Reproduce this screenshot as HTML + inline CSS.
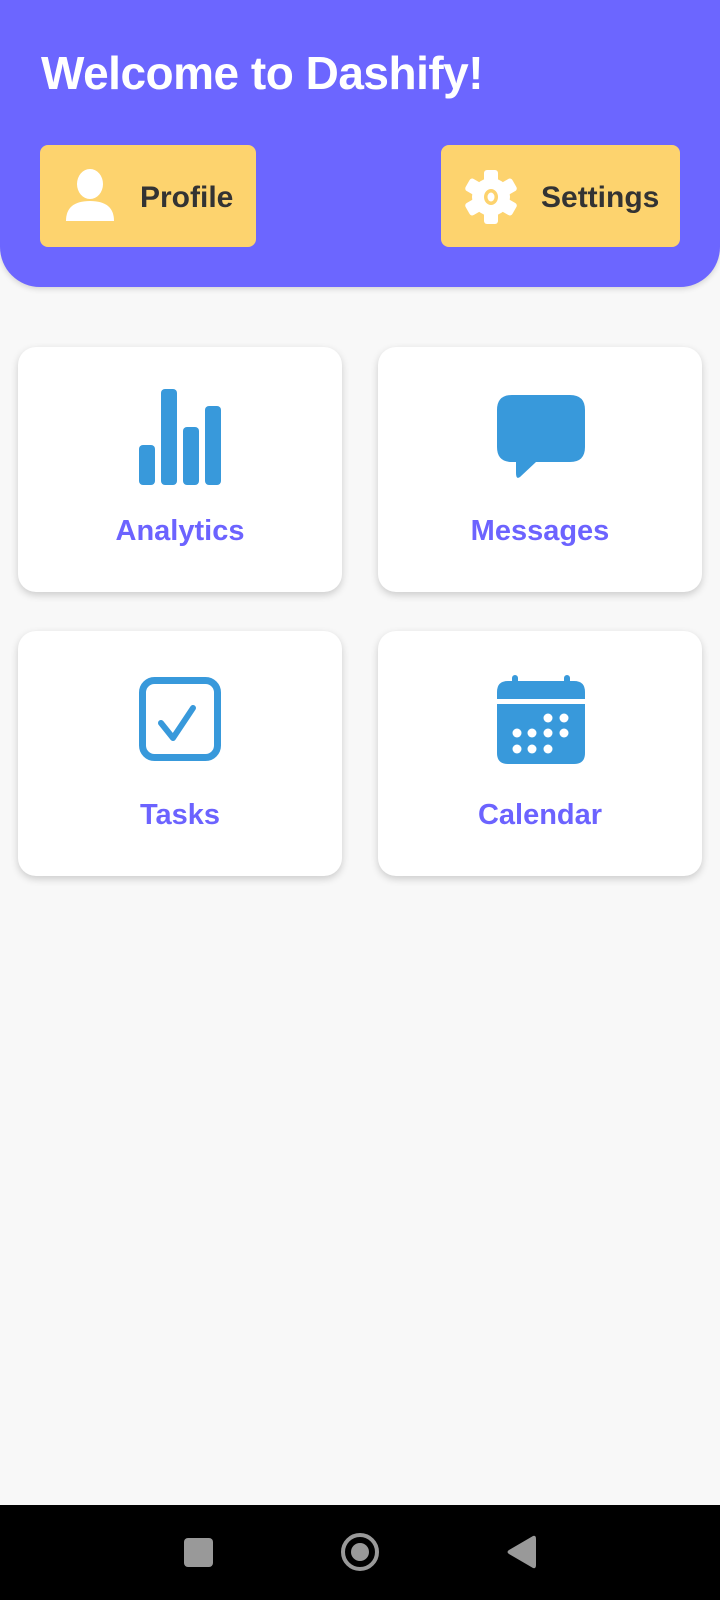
<!DOCTYPE html>
<html><head><style>
*{margin:0;padding:0;box-sizing:border-box}
body{width:720px;height:1600px;background:#f8f8f8;font-family:"Liberation Sans",Roboto,sans-serif;position:relative;overflow:hidden}
.hdr{position:absolute;left:0;top:0;width:720px;height:287px;background:#6c66ff;border-radius:0 0 40px 40px;box-shadow:0 2px 6px rgba(0,0,0,.15)}
h1{position:absolute;left:41px;top:46px;color:#fff;font-size:46px;font-weight:bold;letter-spacing:-0.5px}
.btn{position:absolute;top:145px;height:102px;background:#fdd36e;border-radius:8px;color:#333;font-weight:bold;font-size:30px}
.btn span{position:absolute;top:36px}
.card{position:absolute;width:324px;height:245px;background:#fff;border-radius:18px;box-shadow:0 3px 8px rgba(0,0,0,.18)}
.card .lb{position:absolute;left:0;right:0;top:168px;text-align:center;color:#6c63ff;font-weight:bold;font-size:29px}
.card svg{position:absolute}
.nav{position:absolute;left:0;top:1505px;width:720px;height:95px;background:#000}
</style></head><body>
<div class="hdr">
<h1>Welcome to Dashify!</h1>
<div class="btn" style="left:40px;width:216px">
<svg style="position:absolute;left:24px;top:24px" width="52" height="54" viewBox="0 0 52 54"><ellipse cx="26" cy="15" rx="13" ry="15" fill="#fff"/><path d="M2 52 Q2 32 26 32 Q50 32 50 52 Z" fill="#fff"/></svg>
<span style="left:100px">Profile</span></div>
<div class="btn" style="left:441px;width:239px">
<svg style="position:absolute;left:22px;top:24px" width="56" height="56" viewBox="-28 -28 56 56"><g fill="#fff"><circle r="19"/><g id="t"><rect x="-7" y="-27" width="14" height="12" rx="3"/></g><use href="#t" transform="rotate(60)"/><use href="#t" transform="rotate(120)"/><use href="#t" transform="rotate(180)"/><use href="#t" transform="rotate(240)"/><use href="#t" transform="rotate(300)"/></g><ellipse rx="7" ry="8" fill="#fdd36e"/><ellipse rx="3.5" ry="4.5" fill="#fff"/></svg>
<span style="left:100px">Settings</span></div>
</div>
<div class="card" style="left:18px;top:347px">
<svg style="left:121px;top:42px" width="82" height="96" viewBox="0 0 82 96"><g fill="#3899db"><rect x="0" y="56" width="16" height="40" rx="4"/><rect x="22" y="0" width="16" height="96" rx="4"/><rect x="44" y="38" width="16" height="58" rx="4"/><rect x="66" y="17" width="16" height="79" rx="4"/></g></svg>
<div class="lb">Analytics</div></div>
<div class="card" style="left:378px;top:347px">
<svg style="left:118px;top:48px" width="90" height="84" viewBox="0 0 90 84"><path d="M16 0H74Q89 0 89 15V52Q89 67 74 67H40L24 82Q20 85 20 78V67H16Q1 67 1 52V15Q1 0 16 0Z" fill="#3899db"/></svg>
<div class="lb">Messages</div></div>
<div class="card" style="left:18px;top:631px">
<svg style="left:121px;top:46px" width="82" height="84" viewBox="0 0 82 84"><rect x="3.5" y="3.5" width="75" height="77" rx="12" fill="none" stroke="#3899db" stroke-width="7"/><path d="M22 46 L34 61 L54 31" fill="none" stroke="#3899db" stroke-width="6" stroke-linecap="round" stroke-linejoin="round"/></svg>
<div class="lb">Tasks</div></div>
<div class="card" style="left:378px;top:631px">
<svg style="left:118px;top:44px" width="90" height="90" viewBox="0 0 90 90"><g fill="#3899db"><rect x="16" y="0" width="6" height="12" rx="3"/><rect x="68" y="0" width="6" height="12" rx="3"/><path d="M12 6H78Q89 6 89 17V24H1V17Q1 6 12 6Z"/><path d="M1 29H89V78Q89 89 78 89H12Q1 89 1 78Z"/></g><g fill="#fff"><circle cx="52" cy="43" r="4.5"/><circle cx="68" cy="43" r="4.5"/><circle cx="21" cy="58" r="4.5"/><circle cx="36" cy="58" r="4.5"/><circle cx="52" cy="58" r="4.5"/><circle cx="68" cy="58" r="4.5"/><circle cx="21" cy="74" r="4.5"/><circle cx="36" cy="74" r="4.5"/><circle cx="52" cy="74" r="4.5"/></g></svg>
<div class="lb">Calendar</div></div>
<div class="nav">
<div style="position:absolute;left:184px;top:33px;width:29px;height:29px;background:#999;border-radius:4px"></div>
<div style="position:absolute;left:341px;top:28px;width:38px;height:38px;border:4px solid #999;border-radius:50%"></div>
<div style="position:absolute;left:351px;top:38px;width:18px;height:18px;background:#999;border-radius:50%"></div>
<svg style="position:absolute;left:506px;top:29px" width="30" height="36" viewBox="0 0 30 36"><path d="M27 2Q30 1 30 5V31Q30 35 27 34L3 20Q0 18 3 16Z" fill="#999"/></svg>
</div>
</body></html>
